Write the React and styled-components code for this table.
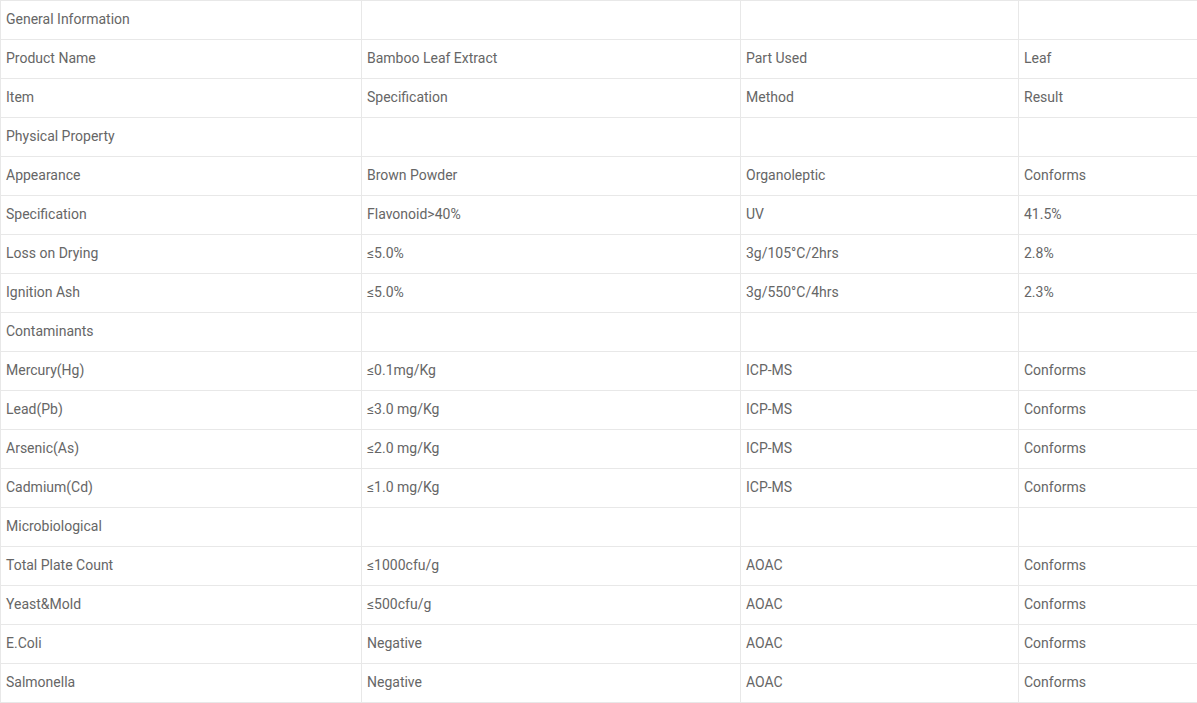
import React from "react";
import styled, { createGlobalStyle } from "styled-components";

const Global = createGlobalStyle`
  html, body { margin: 0; padding: 0; background: #fff; }
  body { font-family: Roboto, "Open Sans", Arial, sans-serif; }
`;

const Table = styled.table`
  width: 1197px;
  border-collapse: collapse;
  table-layout: fixed;
  font-family: Roboto, Arial, sans-serif;
  font-size: 14px;
  color: #666;
`;

const Cell = styled.td`
  border: 1px solid #e8e8e8;
  height: 39px;
  padding: 0 0 3px 5px;
  box-sizing: border-box;
  vertical-align: middle;
  line-height: 20px;
`;

const rows = [
  ["General Information", "", "", ""],
  ["Product Name", "Bamboo Leaf Extract", "Part Used", "Leaf"],
  ["Item", "Specification", "Method", "Result"],
  ["Physical Property", "", "", ""],
  ["Appearance", "Brown Powder", "Organoleptic", "Conforms"],
  ["Specification", "Flavonoid>40%", "UV", "41.5%"],
  ["Loss on Drying", "≤5.0%", "3g/105°C/2hrs", "2.8%"],
  ["Ignition Ash", "≤5.0%", "3g/550°C/4hrs", "2.3%"],
  ["Contaminants", "", "", ""],
  ["Mercury(Hg)", "≤0.1mg/Kg", "ICP-MS", "Conforms"],
  ["Lead(Pb)", "≤3.0 mg/Kg", "ICP-MS", "Conforms"],
  ["Arsenic(As)", "≤2.0 mg/Kg", "ICP-MS", "Conforms"],
  ["Cadmium(Cd)", "≤1.0 mg/Kg", "ICP-MS", "Conforms"],
  ["Microbiological", "", "", ""],
  ["Total Plate Count", "≤1000cfu/g", "AOAC", "Conforms"],
  ["Yeast&Mold", "≤500cfu/g", "AOAC", "Conforms"],
  ["E.Coli", "Negative", "AOAC", "Conforms"],
  ["Salmonella", "Negative", "AOAC", "Conforms"],
];

const widths = [361, 379, 278, 179];

export default function App() {
  return (
    <>
      <Global />
      <Table>
        <colgroup>
          {widths.map((w, i) => (
            <col key={i} style={{ width: w }} />
          ))}
        </colgroup>
        <tbody>
          {rows.map((r, i) => (
            <tr key={i}>
              {r.map((c, j) => (
                <Cell key={j}>{c}</Cell>
              ))}
            </tr>
          ))}
        </tbody>
      </Table>
    </>
  );
}
